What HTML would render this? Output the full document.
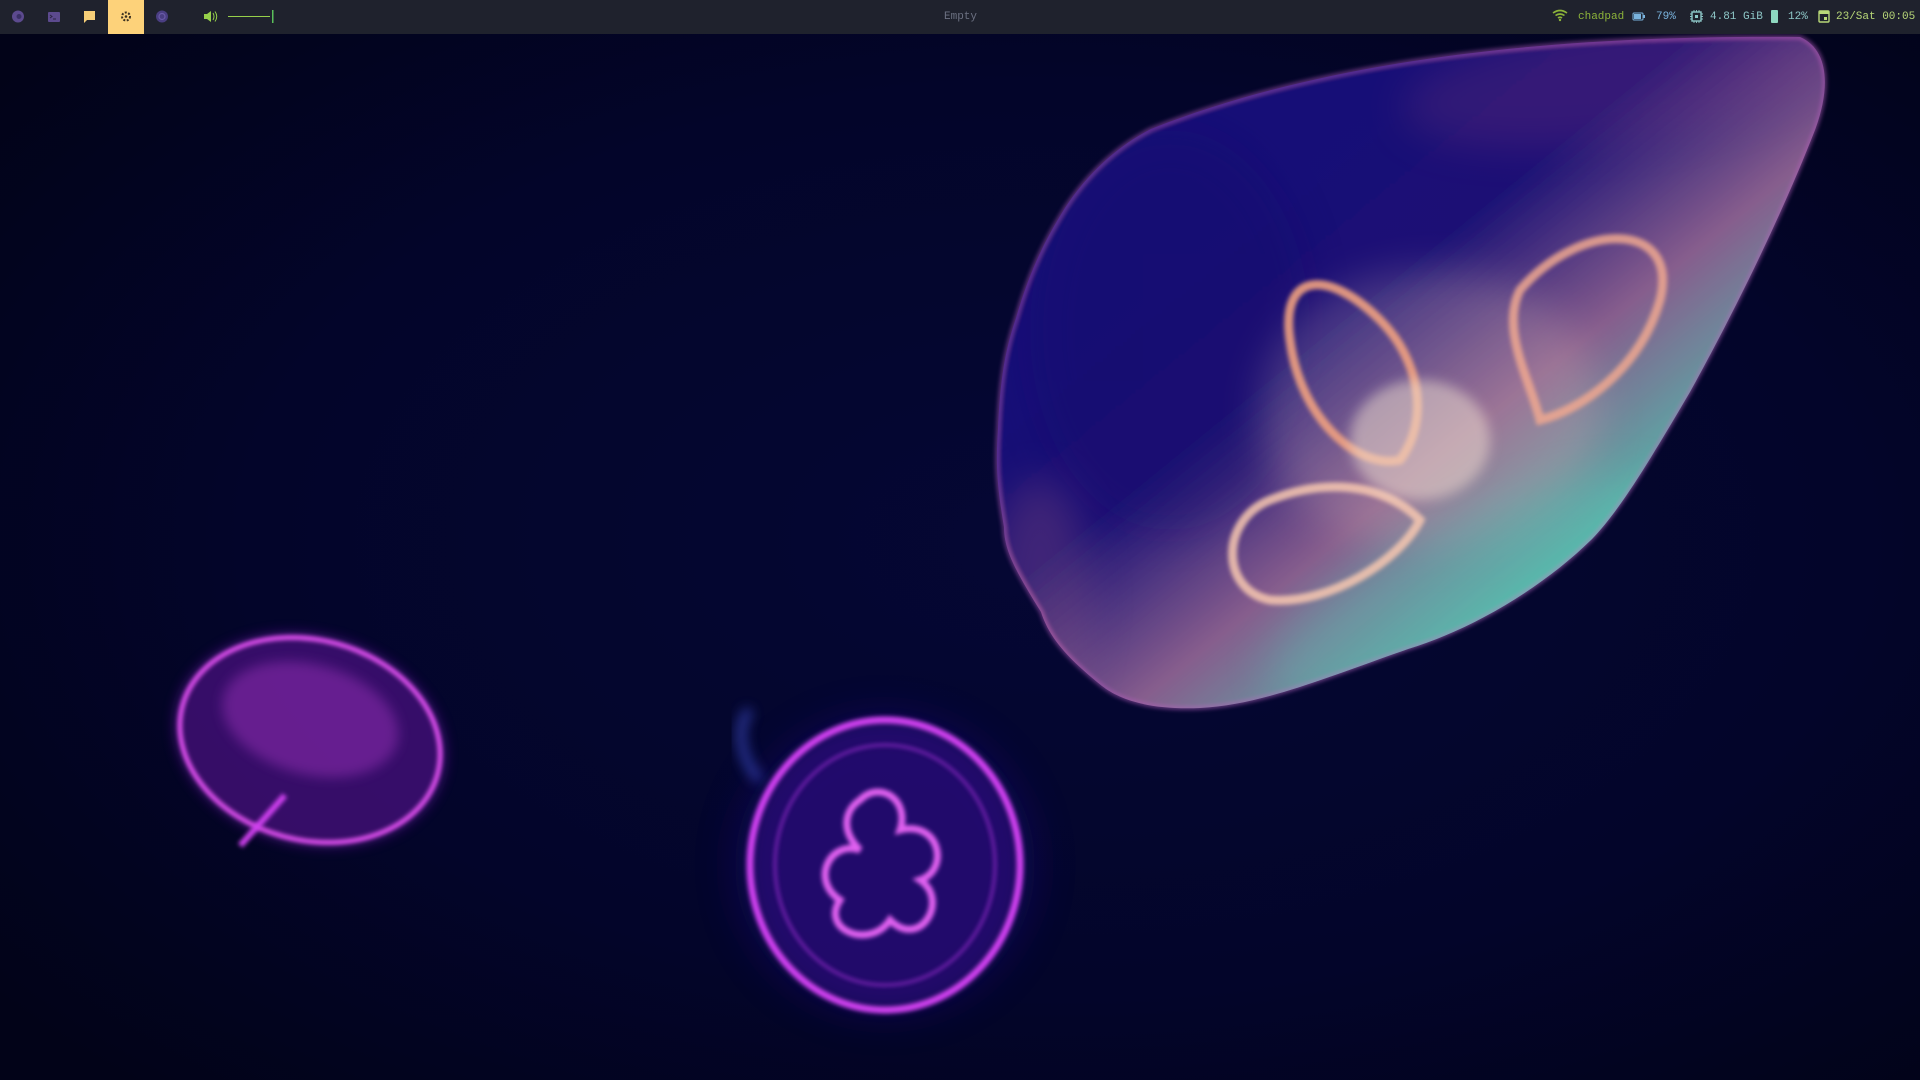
<!DOCTYPE html>
<html><head><meta charset="utf-8"><style>
html,body{margin:0;padding:0;width:1920px;height:1080px;overflow:hidden;background:#03051f;font-family:"Liberation Mono","DejaVu Sans Mono",monospace;}
#bg{position:absolute;left:0;top:0}
#bar{position:absolute;left:0;top:0;width:1920px;height:34px;background:#1f222d;font-size:11px;}
.t{position:absolute;top:10px;line-height:14px;white-space:pre}
.ic{position:absolute;top:0}
</style></head><body>
<svg id="bg" width="1920" height="1080" viewBox="0 0 1920 1080">
<defs>
<radialGradient id="bgg" cx="0.55" cy="0.5" r="0.7"><stop offset="0" stop-color="#050734"/><stop offset="0.6" stop-color="#03052a"/><stop offset="1" stop-color="#020318"/></radialGradient>
<linearGradient id="big" x1="0.1" y1="0.1" x2="0.9" y2="0.9"><stop offset="0" stop-color="#16107a"/><stop offset="0.4" stop-color="#1c1278"/><stop offset="0.6" stop-color="#8a6090"/><stop offset="0.8" stop-color="#58b8ac"/><stop offset="1" stop-color="#28a898"/></linearGradient>
<filter id="b2" x="-50%" y="-50%" width="200%" height="200%"><feGaussianBlur stdDeviation="2"/></filter>
<filter id="b6" x="-50%" y="-50%" width="200%" height="200%"><feGaussianBlur stdDeviation="6"/></filter>
<filter id="b20" x="-100%" y="-100%" width="300%" height="300%"><feGaussianBlur stdDeviation="20"/></filter>
<clipPath id="cj"><path d="M1151,129 C1350,50 1600,35 1800,37 C1830,50 1830,90 1815,130 C1780,220 1730,320 1690,392 C1650,460 1620,510 1592,539 C1540,590 1470,630 1408,649 C1320,680 1260,705 1200,708 C1150,710 1120,700 1102,686 C1070,660 1050,640 1041,612 C1015,570 1004,550 1004,527 C996,480 996,460 998,429 C1000,380 1005,350 1016,318 C1030,270 1045,240 1065,208 C1090,170 1120,145 1151,129Z"/></clipPath>
</defs>
<rect width="1920" height="1080" fill="url(#bgg)"/>
<g>
<path id="bj" d="M1151,129 C1350,50 1600,35 1800,37 C1830,50 1830,90 1815,130 C1780,220 1730,320 1690,392 C1650,460 1620,510 1592,539 C1540,590 1470,630 1408,649 C1320,680 1260,705 1200,708 C1150,710 1120,700 1102,686 C1070,660 1050,640 1041,612 C1015,570 1004,550 1004,527 C996,480 996,460 998,429 C1000,380 1005,350 1016,318 C1030,270 1045,240 1065,208 C1090,170 1120,145 1151,129Z" fill="url(#big)" opacity="0.95"/>
<g clip-path="url(#cj)">
<ellipse cx="1170" cy="330" rx="140" ry="200" fill="#120c6a" opacity="0.8" filter="url(#b20)"/>
<ellipse cx="1040" cy="600" rx="50" ry="120" fill="#c07880" opacity="0.5" filter="url(#b20)"/>
<ellipse cx="1620" cy="80" rx="220" ry="60" fill="#b05080" opacity="0.4" filter="url(#b20)" transform="rotate(-8 1620 80)"/>
<ellipse cx="1430" cy="410" rx="170" ry="140" fill="#e8c8b8" opacity="0.5" filter="url(#b20)"/>
<ellipse cx="1470" cy="590" rx="220" ry="70" fill="#5ad0b8" opacity="0.5" filter="url(#b20)" transform="rotate(-25 1470 590)"/>
</g>
<use href="#bj" fill="none" stroke="#c060c8" stroke-width="3" opacity="0.6" filter="url(#b2)"/>
<path d="M1380,320 C1330,270 1280,270 1290,340 C1300,420 1360,470 1400,460 C1430,420 1420,360 1380,320Z" fill="none" stroke="#f0a080" stroke-width="9" filter="url(#b2)" opacity="0.9"/>
<path d="M1520,290 C1580,220 1680,220 1660,300 C1640,370 1580,410 1540,420 C1530,380 1500,330 1520,290Z" fill="none" stroke="#f0a890" stroke-width="9" filter="url(#b2)" opacity="0.85"/>
<path d="M1270,500 C1220,520 1220,590 1270,600 C1330,605 1400,560 1420,520 C1380,480 1320,480 1270,500Z" fill="none" stroke="#f8c8b0" stroke-width="9" filter="url(#b2)" opacity="0.85"/>
<ellipse cx="1420" cy="440" rx="70" ry="60" fill="#f0e0d0" opacity="0.5" filter="url(#b6)"/>
</g>
<g transform="rotate(15 310 740)">
<ellipse cx="310" cy="740" rx="138" ry="105" fill="#6a14a8" opacity="0.5" filter="url(#b6)"/>
<ellipse cx="310" cy="740" rx="132" ry="100" fill="none" stroke="#e050f0" stroke-width="5" filter="url(#b2)"/>
<ellipse cx="305" cy="720" rx="90" ry="55" fill="#c040d8" opacity="0.35" filter="url(#b6)"/>
<path d="M300,800 L270,860" stroke="#d040f0" stroke-width="6" filter="url(#b2)"/>
</g>
<g>
<circle cx="885" cy="865" r="150" fill="#1c0880" opacity="0.4" filter="url(#b20)"/>
<ellipse cx="885" cy="865" rx="135" ry="145" fill="#3a0c90" opacity="0.45" filter="url(#b6)"/>
<ellipse cx="885" cy="865" rx="135" ry="145" fill="none" stroke="#d040f0" stroke-width="7" filter="url(#b2)"/>
<ellipse cx="885" cy="865" rx="110" ry="120" fill="none" stroke="#b030e0" stroke-width="3" filter="url(#b2)" opacity="0.6"/>
<path d="M860,800 C880,780 910,800 900,830 C940,820 950,870 920,880 C950,900 920,950 890,920 C870,950 820,930 840,900 C810,880 830,840 860,850 C840,830 845,810 860,800Z" fill="none" stroke="#e060f0" stroke-width="7" filter="url(#b2)"/>
<path d="M750,710 C735,725 740,760 760,780" stroke="#4050d0" stroke-width="10" fill="none" opacity="0.6" filter="url(#b6)"/>
</g>
</svg>
<div id="bar">
<svg class="ic" width="320" height="34" viewBox="0 0 320 34">
<circle cx="18" cy="16.5" r="6" fill="#5c4a8e"/><circle cx="19" cy="16.5" r="2.5" fill="#3a3066"/>
<rect x="48" y="12" width="12" height="10" rx="1" fill="#5c4a8e"/><path d="M50,15 l2,1.5 l-2,1.5 M53,19 h3" stroke="#2a2440" stroke-width="1" fill="none"/>
<path d="M84,11 h11 v9 h-8 l-3,3z" fill="#f6ce78"/>
<rect x="108" y="0" width="36" height="34" fill="#fdd27a"/>
<circle cx="126" cy="16.5" r="4" fill="none" stroke="#3a3020" stroke-width="2" stroke-dasharray="2 1.5"/><circle cx="126" cy="16.5" r="1.3" fill="#3a3020"/>
<circle cx="162" cy="16.5" r="6" fill="#4a3e82"/><circle cx="162" cy="16.5" r="3" fill="none" stroke="#6a5aa8" stroke-width="1.2"/>
<path d="M204,14 h3 l4,-3 v11 l-4,-3 h-3z" fill="#96d04a"/><path d="M213,13 q2,3.5 0,7 M215,11.5 q3.5,5 0,10" stroke="#96d04a" stroke-width="1" fill="none"/>
<line x1="228" y1="16.5" x2="270" y2="16.5" stroke="#96d04a" stroke-width="1"/>
<rect x="272" y="10" width="1.5" height="13" fill="#5abf5a"/>
</svg>
<div class="t" style="left:944px;color:#6c7182">Empty</div>
<svg class="ic" style="left:1550px" width="370" height="34" viewBox="1550 0 370 34">
<path d="M1553,13 q7,-5 14,0 M1555.5,15.5 q4.5,-3 9,0 M1558,18 q2,-1.5 4,0" stroke="#8db43a" stroke-width="1.6" fill="none"/><circle cx="1560" cy="20" r="1.2" fill="#8db43a"/>
<rect x="1633" y="13" width="10" height="7" rx="1" fill="none" stroke="#7ab4de" stroke-width="1"/><rect x="1634" y="14" width="7" height="5" fill="#7ab4de"/><rect x="1643.5" y="15" width="1.5" height="3" fill="#7ab4de"/>
<rect x="1692" y="12" width="9" height="9" fill="none" stroke="#8ec8c8" stroke-width="1.4"/><rect x="1695" y="15" width="3" height="3" fill="#8ec8c8"/><path d="M1694,10v2M1696.5,10v2M1699,10v2M1694,21v2M1696.5,21v2M1699,21v2M1690,14h2M1690,16.5h2M1690,19h2M1701,14h2M1701,16.5h2M1701,19h2" stroke="#8ec8c8" stroke-width="0.9"/>
<rect x="1771" y="10" width="7" height="13" rx="1" fill="#8ed8c0"/>
<rect x="1819" y="11" width="10" height="11" rx="1" fill="none" stroke="#b8d878" stroke-width="1.4"/><rect x="1819" y="11" width="10" height="3" fill="#b8d878"/><rect x="1824" y="17" width="3" height="3" fill="#b8d878"/>
</svg>
<div class="t" style="left:1578px;color:#8db43a">chadpad</div>
<div class="t" style="left:1656px;color:#7ab4de">79%</div>
<div class="t" style="left:1710px;color:#8ec8c8">4.81 GiB</div>
<div class="t" style="left:1788px;color:#8ec8c8">12%</div>
<div class="t" style="left:1836px;color:#b8d878">23/Sat 00:05</div>
</div>
</body></html>
